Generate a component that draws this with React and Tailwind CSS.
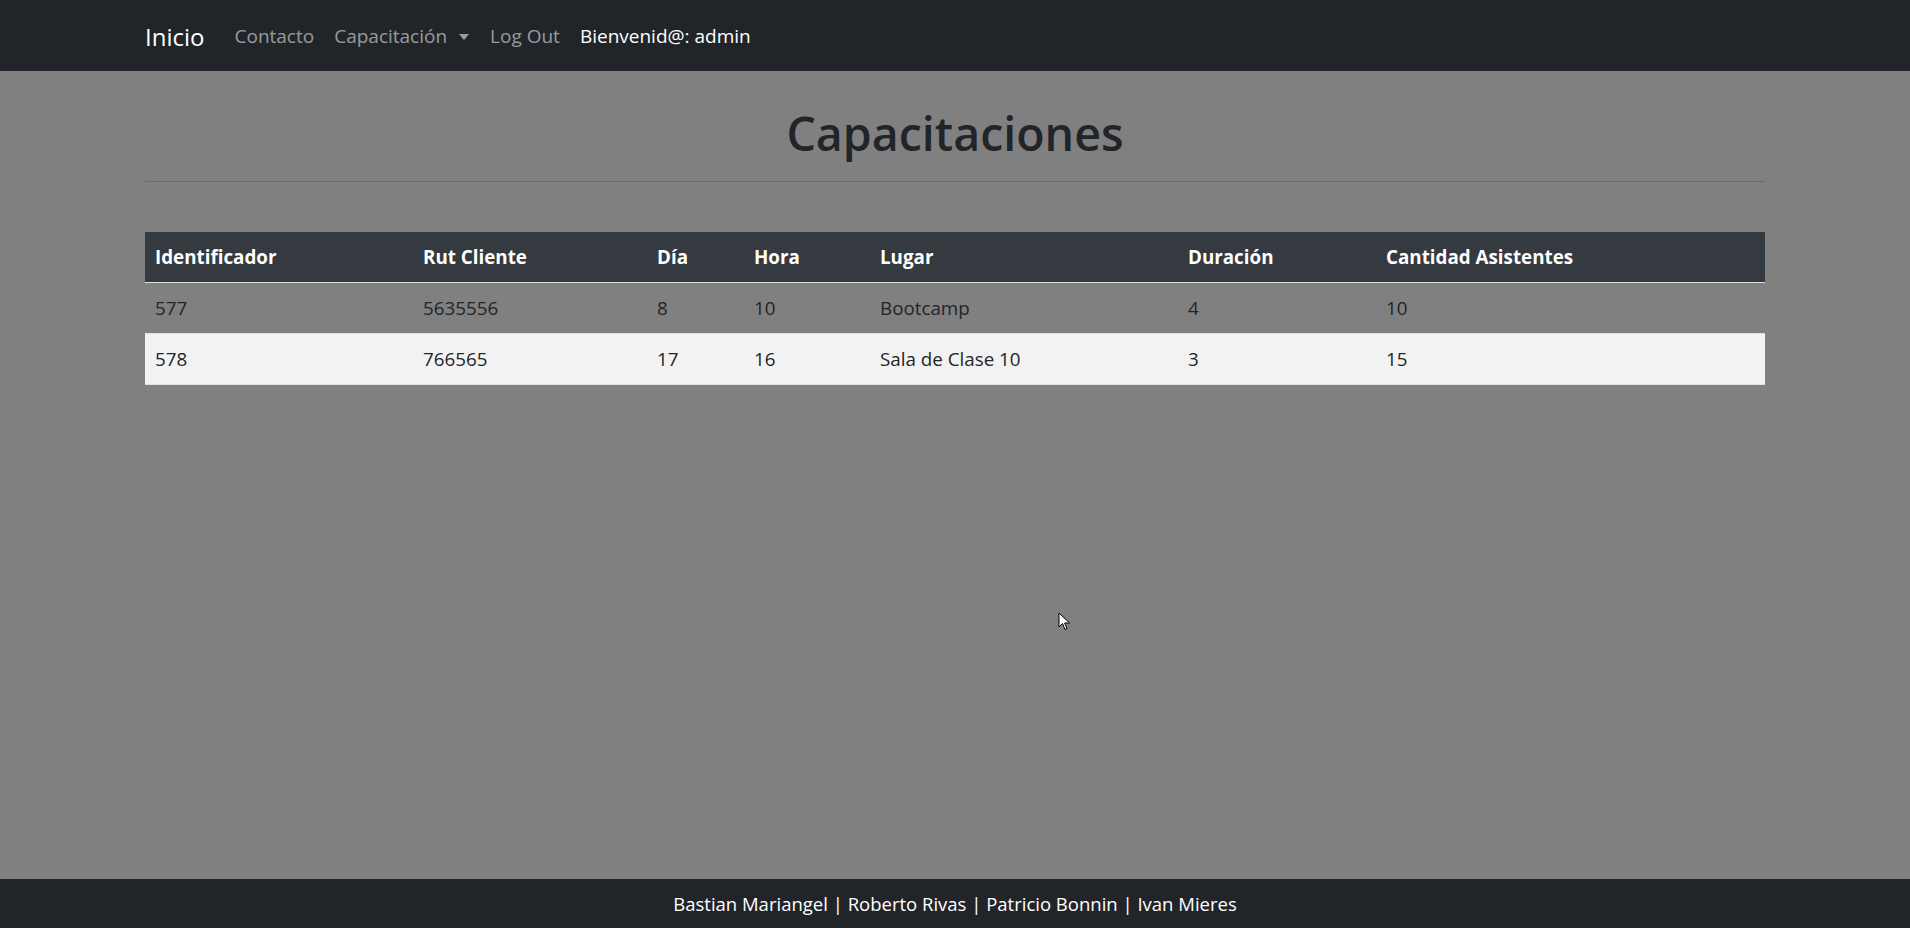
import React from "react";

const cols = [
  { label: "Identificador", w: "w-[268px]" },
  { label: "Rut Cliente", w: "w-[234px]" },
  { label: "Día", w: "w-[97px]" },
  { label: "Hora", w: "w-[126px]" },
  { label: "Lugar", w: "w-[308px]" },
  { label: "Duración", w: "w-[198px]" },
  { label: "Cantidad Asistentes", w: "" },
];

const rows = [
  ["577", "5635556", "8", "10", "Bootcamp", "4", "10"],
  ["578", "766565", "17", "16", "Sala de Clase 10", "3", "15"],
];

export default function App() {
  return (
    <div
      className="relative flex h-[928px] flex-col bg-[#808080] text-[#212529]"
      style={{ fontFamily: '"Segoe UI", "Open Sans", "Noto Sans", sans-serif' }}
    >
      <nav className="h-[71px] shrink-0 bg-[#212529]">
        <div className="mx-auto flex h-full w-[1620px] items-center pt-[2px]">
          <a className="mr-[20px] text-[24px] text-white">Inicio</a>
          <a className="px-[10px] text-[19px] text-[#ffffff8c]">Contacto</a>
          <a className="flex items-center px-[10px] text-[19px] text-[#ffffff8c]">
            Capacitación
            <span className="ml-[12px] mr-[1px] inline-block h-0 w-0 border-x-[5px] border-t-[6px] border-x-transparent border-t-[#ffffff8c]" />
          </a>
          <a className="px-[10px] text-[19px] text-[#ffffff8c]">Log Out</a>
          <span className="px-[10px] text-[19px] text-white">Bienvenid@: admin</span>
        </div>
      </nav>

      <main className="flex-1">
        <div className="mx-auto w-[1620px]">
          <h1 className="mt-[32px] h-[60px] text-center text-[46.5px] font-semibold leading-[60px] text-[#212529]">
            Capacitaciones
          </h1>
          <hr className="mt-[18px] border-t border-[#6a6a6a]" />
          <table className="mt-[50px] w-full border-collapse text-left text-[18.8px]">
            <thead>
              <tr className="h-[50px] border-b border-[#dee2e6] bg-[#343a40] text-white">
                {cols.map((c) => (
                  <th key={c.label} className={`${c.w} px-[10px] pt-[1px] font-bold`}>
                    {c.label}
                  </th>
                ))}
              </tr>
            </thead>
            <tbody>
              {rows.map((r, i) => (
                <tr
                  key={i}
                  className={
                    i === 1
                      ? "h-[51px] border-y border-[#dee2e6] bg-[#f2f2f2]"
                      : "h-[51px]"
                  }
                >
                  {r.map((v, j) => (
                    <td key={j} className="px-[10px] pt-[2px] text-[#212529]">
                      {v}
                    </td>
                  ))}
                </tr>
              ))}
            </tbody>
          </table>
        </div>
      </main>

      <footer className="flex h-[49px] shrink-0 items-center justify-center bg-[#212529] text-[18.5px] text-white">
        Bastian Mariangel | Roberto Rivas | Patricio Bonnin | Ivan Mieres
      </footer>

      <svg
        className="absolute left-[1058px] top-[612px]"
        width="14"
        height="20"
        viewBox="0 0 14 20"
      >
        <path
          d="M1 1 L1 15 L4.5 11.5 L7 17.5 L9 16.6 L6.6 11 L11.5 11 Z"
          fill="#fff"
          stroke="#000"
          strokeWidth="1"
          strokeLinejoin="round"
        />
      </svg>
    </div>
  );
}
